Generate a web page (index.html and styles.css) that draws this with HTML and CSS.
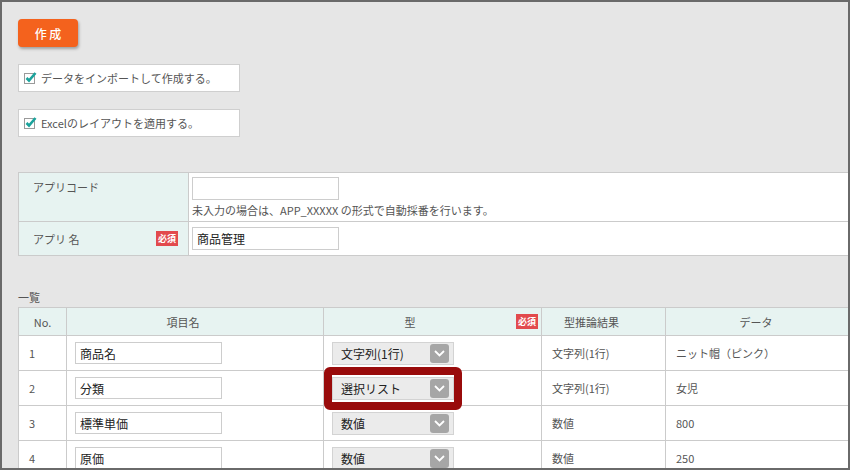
FILE: index.html
```html
<!DOCTYPE html>
<html lang="ja">
<head>
<meta charset="utf-8">
<title>アプリ作成</title>
<link rel="stylesheet" href="styles.css">
</head>
<body>
<div class="frame">
  <button class="btn-create">作 成</button>

  <label class="check-box">
    <svg class="check-icon" width="13" height="13" viewBox="0 0 13 13"><rect x="0.5" y="2.5" width="10" height="10" fill="#fff" stroke="#9a9a9a"/><path d="M2.5 7 L5 9.5 L11.5 2" fill="none" stroke="#1ba39c" stroke-width="2.6"/></svg>
    <span>データをインポートして作成する。</span>
  </label>
  <label class="check-box">
    <svg class="check-icon" width="13" height="13" viewBox="0 0 13 13"><rect x="0.5" y="2.5" width="10" height="10" fill="#fff" stroke="#9a9a9a"/><path d="M2.5 7 L5 9.5 L11.5 2" fill="none" stroke="#1ba39c" stroke-width="2.6"/></svg>
    <span>Excelのレイアウトを適用する。</span>
  </label>

  <table class="form-table">
    <colgroup><col class="col-label"><col></colgroup>
    <tr class="row-code">
      <th>アプリコード</th>
      <td>
        <input class="text-input" type="text" value="">
        <p class="hint">未入力の場合は、APP_XXXXX の形式で自動採番を行います。</p>
      </td>
    </tr>
    <tr class="row-name">
      <th><div class="th-inner"><span>アプリ 名</span><span class="badge">必須</span></div></th>
      <td><input class="text-input" type="text" value="商品管理"></td>
    </tr>
  </table>

  <div class="list-title">一覧</div>

  <table class="list-table">
    <colgroup>
      <col class="col-no"><col class="col-name"><col class="col-type"><col class="col-infer"><col class="col-data">
    </colgroup>
    <thead>
      <tr>
        <th class="h-no">No.</th>
        <th class="h-name">項目名</th>
        <th class="h-type"><div class="th-type"><span class="th-type-text">型</span><span class="badge">必須</span></div></th>
        <th class="h-infer">型推論結果</th>
        <th class="h-data">データ</th>
      </tr>
    </thead>
    <tbody>
      <tr>
        <td>1</td>
        <td class="cell-input"><input class="item-input" type="text" value="商品名"></td>
        <td class="cell-select"><div class="select"><span>文字列(1行)</span><span class="select-arrow"><svg width="11" height="7" viewBox="0 0 11 7"><path d="M1 1 L5.5 5.5 L10 1" fill="none" stroke="#fff" stroke-width="1.8"/></svg></span></div></td>
        <td>文字列(1行)</td>
        <td>ニット帽（ピンク）</td>
      </tr>
      <tr>
        <td>2</td>
        <td class="cell-input"><input class="item-input" type="text" value="分類"></td>
        <td class="cell-select"><div class="select highlighted"><span>選択リスト</span><span class="select-arrow"><svg width="11" height="7" viewBox="0 0 11 7"><path d="M1 1 L5.5 5.5 L10 1" fill="none" stroke="#fff" stroke-width="1.8"/></svg></span><span class="highlight-ring"></span></div></td>
        <td>文字列(1行)</td>
        <td>女児</td>
      </tr>
      <tr>
        <td>3</td>
        <td class="cell-input"><input class="item-input" type="text" value="標準単価"></td>
        <td class="cell-select"><div class="select"><span>数値</span><span class="select-arrow"><svg width="11" height="7" viewBox="0 0 11 7"><path d="M1 1 L5.5 5.5 L10 1" fill="none" stroke="#fff" stroke-width="1.8"/></svg></span></div></td>
        <td>数値</td>
        <td>800</td>
      </tr>
      <tr>
        <td>4</td>
        <td class="cell-input"><input class="item-input" type="text" value="原価"></td>
        <td class="cell-select"><div class="select"><span>数値</span><span class="select-arrow"><svg width="11" height="7" viewBox="0 0 11 7"><path d="M1 1 L5.5 5.5 L10 1" fill="none" stroke="#fff" stroke-width="1.8"/></svg></span></div></td>
        <td>数値</td>
        <td>250</td>
      </tr>
    </tbody>
  </table>
</div>
</body>
</html>
```

FILE: styles.css
```css
* { box-sizing: border-box; }
html, body { margin: 0; padding: 0; }
body {
  font-family: "Noto Sans CJK JP", "Noto Sans", sans-serif;
  font-size: 11px;
  color: #555;
  background: #e6e6e6;
}
.frame {
  width: 850px;
  height: 470px;
  border: 2px solid #6a6a6a;
  background: #e6e6e6;
  overflow: hidden;
  padding: 17px 0 0 16px;
}
.btn-create {
  display: block;
  width: 60px;
  height: 28px;
  padding: 0;
  border: 0;
  border-radius: 4px;
  background: #f4621d;
  color: #fff;
  font-family: inherit;
  font-size: 12px;
  font-weight: 500;
  box-shadow: 1px 2px 3px rgba(0, 0, 0, 0.3);
}
.check-box {
  display: flex;
  align-items: center;
  gap: 4px;
  width: 222px;
  height: 28px;
  margin-top: 17px;
  padding-left: 5px;
  background: #fff;
  border: 1px solid #cfcfcf;
  color: #555;
}
.check-icon { flex: none; margin-top: -2px; }

.form-table {
  margin-top: 35px;
  width: 853px;
  border-collapse: collapse;
  table-layout: fixed;
  background: #fff;
}
.form-table .col-label { width: 170px; }
.form-table th, .form-table td { border: 1px solid #cbcbcb; }
.form-table th {
  background: #e7f3f1;
  font-weight: normal;
  text-align: left;
  color: #555;
  padding: 0 10px 0 14px;
}
.row-code th { vertical-align: top; padding-top: 6px; line-height: 16px; }
.row-code { height: 49px; }
.row-name { height: 34px; }
.form-table td { padding: 4px 4px 0 3px; vertical-align: top; }
.row-name td { padding-top: 5px; }
.th-inner { display: flex; align-items: center; justify-content: space-between; }
.text-input {
  display: block;
  width: 147px;
  height: 23px;
  margin: 0;
  padding: 0 4px;
  border: 1px solid #cdcdcd;
  background: #fff;
  font-family: inherit;
  font-size: 12px;
  color: #222;
}
.hint { margin: 2px 0 0; line-height: 16px; color: #555; }

.badge {
  display: inline-block;
  width: 22px;
  height: 15px;
  line-height: 15px;
  background: #e24a4d;
  color: #fff;
  font-size: 9px;
  font-weight: bold;
  text-align: center;
}

.list-title { margin-top: 33px; height: 16px; line-height: 16px; margin-bottom: 2px; color: #555; }

.list-table {
  width: 853px;
  border-collapse: collapse;
  table-layout: fixed;
  background: #fff;
}
.col-no { width: 48px; }
.col-name { width: 257px; }
.col-type { width: 218px; }
.col-infer { width: 124px; }
.list-table th, .list-table td { border: 1px solid #cbcbcb; }
.list-table thead tr { height: 28px; }
.list-table th {
  background: #e7f3f1;
  font-weight: normal;
  color: #555;
  text-align: center;
  padding: 0 24px 0 0;
}
.list-table th.h-no { padding: 0; }
.list-table th.h-type { padding: 0 3px 0 0; }
.th-type { display: flex; align-items: center; }
.th-type-text { flex: 1; text-align: center; padding-right: 20px; }
.list-table tbody tr { height: 35px; }
.list-table td { padding: 0 10px; vertical-align: middle; color: #555; }
.list-table td.cell-input, .list-table td.cell-select { padding: 0 8px; }
.item-input {
  display: block;
  width: 147px;
  height: 22px;
  margin: 0;
  padding: 0 4px;
  border: 1px solid #cdcdcd;
  background: #fff;
  font-family: inherit;
  font-size: 12px;
  color: #222;
}
.select {
  position: relative;
  display: flex;
  align-items: center;
  justify-content: space-between;
  width: 122px;
  height: 23px;
  padding: 0 4px 0 8px;
  background: #ebebeb;
  border: 1px solid #d3d3d3;
  color: #222;
  font-size: 12px;
}
.select-arrow {
  display: flex;
  align-items: center;
  justify-content: center;
  width: 19px;
  height: 19px;
  border-radius: 3px;
  background: #a6a6a6;
}
.highlight-ring {
  position: absolute;
  left: -9px;
  top: -11px;
  right: -9px;
  bottom: -11px;
  border: 8px solid #990b0b;
  border-radius: 6px;
  pointer-events: none;
}
.highlighted { box-shadow: -4px 0 0 #fff, 0 3px 0 #fff; }
```
